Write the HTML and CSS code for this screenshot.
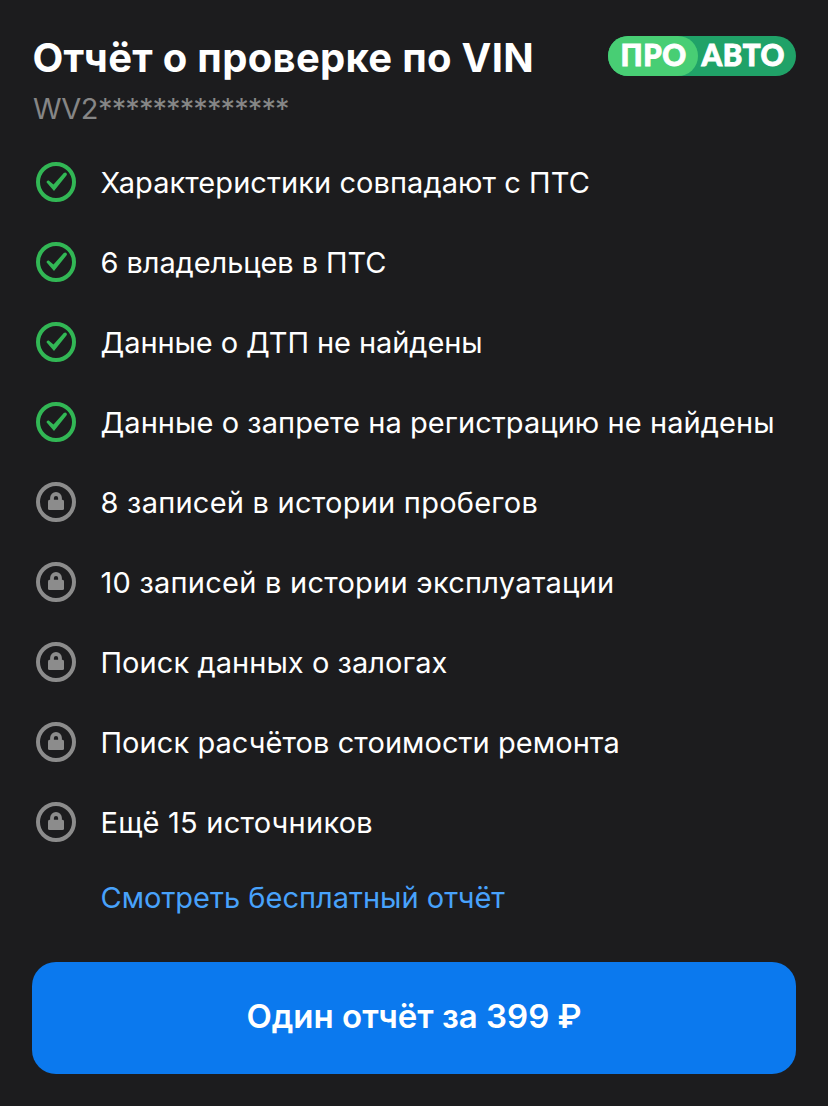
FILE: index.html
```html
<!DOCTYPE html>
<html lang="ru">
<head>
<meta charset="utf-8">
<title>Отчёт о проверке по VIN</title>
<link rel="stylesheet" href="styles.css">
</head>
<body>
<svg class="defs" aria-hidden="true">
<symbol id="check" viewBox="0 0 40 40"><circle cx="20" cy="20" r="18" fill="none" stroke="currentColor" stroke-width="4"/><path d="M10.500 20.300Q10.600 18.300 12.700 18.600L17.500 22.400 27.800 11Q29.200 9.900 30.400 10.900 31.400 12 30.600 13.300L18 29Z" fill="currentColor"/></symbol>
<symbol id="lock" viewBox="0 0 40 40"><circle cx="20" cy="20" r="18" fill="none" stroke="currentColor" stroke-width="4"/><rect x="12" y="17.700" width="16" height="10.400" rx="1.500" fill="currentColor"/><path d="M16 18.500V16a4 4 0 0 1 8 0v2.500" fill="none" stroke="currentColor" stroke-width="3.800"/></symbol>
</svg>
<main class="card">
<header class="header">
<div><h1 class="title">Отчёт о проверке по VIN</h1><div class="vin">WV2<span class="mask">**************</span></div></div>
<div class="logo"><span class="logo-pro">ПРО</span><span class="logo-auto">АВТО</span></div>
</header>
<ul class="list">
<li class="row"><svg class="icon ok"><use href="#check"/></svg><span class="label">Характеристики совпадают с ПТС</span></li>
<li class="row tight"><svg class="icon ok"><use href="#check"/></svg><span class="label">6 владельцев в ПТС</span></li>
<li class="row tight"><svg class="icon ok"><use href="#check"/></svg><span class="label">Данные о ДТП не найдены</span></li>
<li class="row"><svg class="icon ok"><use href="#check"/></svg><span class="label">Данные о запрете на регистрацию не найдены</span></li>
<li class="row wide"><svg class="icon"><use href="#lock"/></svg><span class="label">8 записей в истории пробегов</span></li>
<li class="row wide"><svg class="icon"><use href="#lock"/></svg><span class="label">10 записей в истории эксплуатации</span></li>
<li class="row"><svg class="icon"><use href="#lock"/></svg><span class="label">Поиск данных о залогах</span></li>
<li class="row"><svg class="icon"><use href="#lock"/></svg><span class="label">Поиск расчётов стоимости ремонта</span></li>
<li class="row wide"><svg class="icon"><use href="#lock"/></svg><span class="label">Ещё 15 источников</span></li>
</ul>
<a class="link">Смотреть бесплатный отчёт</a>
<button class="buy">Один отчёт за 399 ₽</button>
</main>
</body>
</html>
```
FILE: styles.css
```css
* { box-sizing: border-box; }
body { margin: 0; background: #1c1c1e; color: #fff; font-family: Inter, "Liberation Sans", sans-serif; }
.defs { display: none; }
.card { display: flex; flex-direction: column; height: 1106px; padding: 36px 32px 32px; }
.header { display: flex; justify-content: space-between; height: 106px; white-space: nowrap; }
.title { margin: 0; padding-left: 0.5px; font-size: 40px; line-height: 44px; font-weight: 700; letter-spacing: 0.3px; }
.vin { margin-top: 11px; padding-left: 1px; font-size: 29px; line-height: 36px; letter-spacing: -0.4px; color: #868686; }
.mask { letter-spacing: -0.92px; }
.logo { display: flex; width: 188px; height: 40px; border-radius: 20px; background: #20a268; font-family: Lato, "Open Sans", sans-serif; font-size: 29.5px; line-height: 38px; font-weight: 900; letter-spacing: 0.6px; -webkit-text-stroke: 0.9px #fff; }
.logo-pro { width: 90px; padding-left: 12.5px; border-radius: 20px; background: #48ce74; }
.logo-auto { padding-left: 3.5px; }
.list { margin: 0; padding: 0; list-style: none; }
.row { display: flex; align-items: center; gap: 24px; height: 80px; padding-left: 4px; white-space: nowrap; }
.icon { flex: none; width: 40px; height: 40px; color: #8c8c8c; }
.ok { color: #32b755; }
.label { padding-top: 1px; padding-left: 0.5px; font-size: 29px; line-height: 40px; letter-spacing: 0.06px; }
.tight .label { letter-spacing: -0.08px; }
.wide .label { letter-spacing: 0.24px; }
.link { margin: 16px 0 0 68.5px; font-size: 29px; line-height: 40px; color: #48a2fb; }
.buy { margin: auto 0 0; padding: 0 0 4px; height: 112px; border: 0; border-radius: 24px; background: #0b79ee; color: #fff; font: 600 33px Inter, sans-serif; }
```
